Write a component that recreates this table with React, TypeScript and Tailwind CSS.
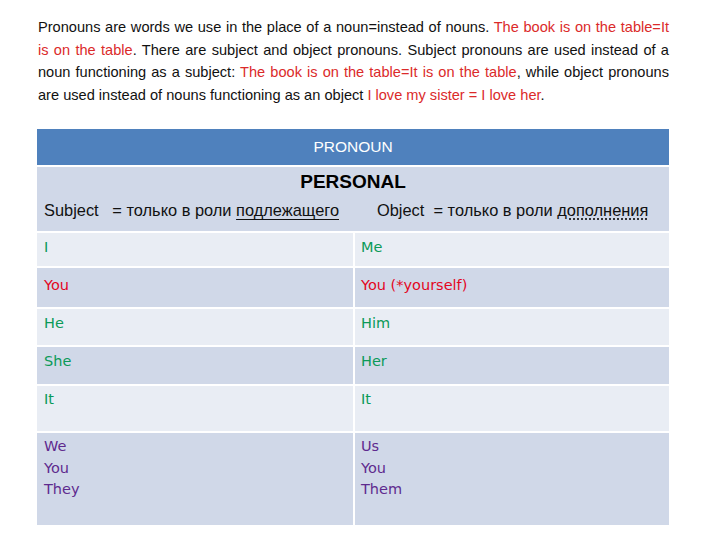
import React from "react";

const GREEN = "text-[#0b9a58]";
const RED = "text-[#e3061f]";
const PURPLE = "text-[#5e2a8e]";

type Row = { h: string; bg: string; pt: string; left: React.ReactNode; right: React.ReactNode; color: string };

const rows: Row[] = [
  { h: "h-[33px]", bg: "bg-[#e9edf4]", pt: "pt-[4px]", left: "I", right: "Me", color: GREEN },
  { h: "h-[39px]", bg: "bg-[#d0d8e8]", pt: "pt-[7px]", left: "You", right: "You (*yourself)", color: RED },
  { h: "h-[36px]", bg: "bg-[#e9edf4]", pt: "pt-[4px]", left: "He", right: "Him", color: GREEN },
  { h: "h-[37px]", bg: "bg-[#d0d8e8]", pt: "pt-[4px]", left: "She", right: "Her", color: GREEN },
  { h: "h-[45px]", bg: "bg-[#e9edf4]", pt: "pt-[3px]", left: "It", right: "It", color: GREEN },
  {
    h: "h-[92px]",
    bg: "bg-[#d0d8e8]",
    pt: "pt-[3px]",
    left: (
      <>
        We
        <br />
        You
        <br />
        They
      </>
    ),
    right: (
      <>
        Us
        <br />
        You
        <br />
        Them
      </>
    ),
    color: PURPLE,
  },
];

export default function App() {
  const red = "text-[#db2a2a]";
  const just = "text-justify [text-align-last:justify]";
  return (
    <div className="w-[720px] h-[540px] bg-white overflow-hidden text-[#111]">
      <div className="pt-[16px] pl-[38px] w-[669px] font-['Liberation_Sans',sans-serif] text-[14.6px] leading-[22.5px]">
        <div className={just}>
          Pronouns are words we use in the place of a noun=instead of nouns.{" "}
          <span className={red}>The book is on the table=It</span>
        </div>
        <div className={just}>
          <span className={red}>is on the table</span>. There are subject and object pronouns. Subject pronouns are used
          instead of a
        </div>
        <div className={just}>
          noun functioning as a subject: <span className={red}>The book is on the table=It is on the table</span>, while
          object pronouns
        </div>
        <div className="whitespace-nowrap">
          are used instead of nouns functioning as an object <span className={red}>I love my sister = I love her</span>.
        </div>
      </div>

      <div className="ml-[37px] mt-[23px] w-[632px] flex flex-col gap-[2px]">
        <div className="h-[36px] bg-[#4f81bd] flex items-center justify-center text-white font-['Liberation_Sans',sans-serif] text-[15.5px]">
          PRONOUN
        </div>
        <div className="h-[64px] bg-[#d0d8e8] flex flex-col font-['Liberation_Sans',sans-serif]">
          <div className="pt-[3px] text-center font-bold text-[19px] leading-[24px] text-black">PERSONAL</div>
          <div className="mt-[6px] grid grid-cols-[340px_1fr] text-[16.4px] leading-[20px] text-[#111] whitespace-nowrap">
            <div className="pl-[7px]">
              Subject&nbsp;&nbsp; = только в роли <span className="underline underline-offset-[3px]">подлежащего</span>
            </div>
            <div>
              Object&nbsp; = только в роли{" "}
              <span className="underline decoration-dotted underline-offset-[3px]">дополнения</span>
            </div>
          </div>
        </div>
        {rows.map((r, i) => (
          <div
            key={i}
            className={`grid grid-cols-[316px_314px] gap-x-[2px] ${r.h} font-['DejaVu_Sans',sans-serif] text-[14.5px] leading-[21.5px] ${r.color}`}
          >
            <div className={`${r.bg} pl-[7px] ${r.pt}`}>{r.left}</div>
            <div className={`${r.bg} pl-[6px] ${r.pt}`}>{r.right}</div>
          </div>
        ))}
      </div>
    </div>
  );
}
